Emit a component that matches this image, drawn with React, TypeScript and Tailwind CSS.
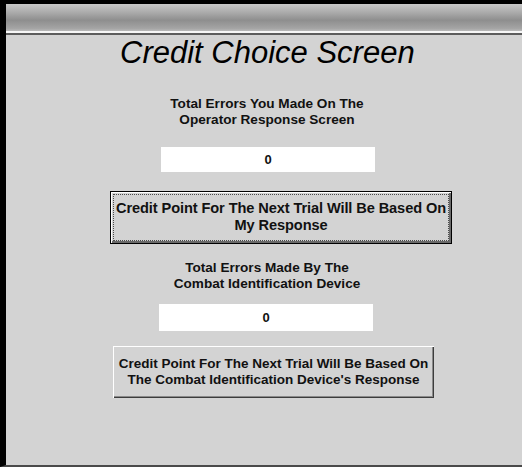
import React from "react";

const sans = { fontFamily: '"Liberation Sans", Arial, sans-serif' };

function Label({ lines }: { lines: string[] }) {
  return (
    <div className="w-[260px] text-center text-[13.6px] font-bold leading-[16px] text-[#111111]">
      {lines.map((l) => (
        <div key={l}>{l}</div>
      ))}
    </div>
  );
}

function CountBox({ value, tall }: { value: string; tall?: boolean }) {
  return (
    <div
      className={
        "flex w-[214px] items-center justify-center bg-white text-[13px] font-bold text-[#111111] " +
        (tall ? "h-[27px]" : "h-[25px]")
      }
    >
      {value}
    </div>
  );
}

export default function App() {
  return (
    <div
      className="flex h-[467px] w-[522px] flex-col border-l-[6px] border-t-[4px] border-b-[2px] border-l-black border-t-black border-b-[#4a4a4a] bg-[#d3d3d3]"
      style={sans}
    >
      {/* title bar */}
      <div className="h-[27px] w-full bg-[linear-gradient(to_bottom,#c8c8c8_0%,#acacac_30%,#8e8e8e_60%,#a4a4a4_90%,#b8b8b8_100%)]" />
      <div className="h-[2px] w-full bg-[#f6f6f6]" />
      <div className="h-[2px] w-full bg-[#5c5c5c]" />

      {/* screen body */}
      <div className="flex flex-1 flex-col">
        <div className="ml-[114px] mt-[1px] text-[31px] italic leading-[33px] text-black">
          Credit Choice Screen
        </div>

        <div className="ml-[131px] mt-[27px]">
          <Label lines={["Total Errors You Made On The", "Operator Response Screen"]} />
        </div>

        <div className="ml-[155px] mt-[19px]">
          <CountBox value="0" />
        </div>

        {/* focused button */}
        <div className="ml-[104px] mt-[19px] flex h-[53px] w-[342px] border border-black bg-[#d3d3d3] p-[1px] shadow-[inset_1px_1px_0_#ffffff,inset_-2px_-2px_0_#6a6a6a]">
          <div className="m-[1px] flex flex-1 flex-col items-center justify-center border border-dotted border-[#4a4a4a] pb-[2px] text-[14.6px] font-bold leading-[17px] tracking-[-0.1px] text-[#111111]">
            <div className="whitespace-nowrap">Credit Point For The Next Trial Will Be Based On</div>
            <div>My Response</div>
          </div>
        </div>

        <div className="ml-[131px] mt-[16px]">
          <Label lines={["Total Errors Made By The", "Combat Identification Device"]} />
        </div>

        <div className="ml-[153px] mt-[12px]">
          <CountBox value="0" tall />
        </div>

        <div className="ml-[107px] mt-[15px] flex h-[52px] w-[321px] flex-col items-center justify-center bg-[#d3d3d3] text-[13.5px] font-bold leading-[16px] text-[#111111] shadow-[inset_1px_1px_0_#ffffff,inset_-1px_-1px_0_#3c3c3c,inset_-2px_-2px_0_#8a8a8a]">
          <div>Credit Point For The Next Trial Will Be Based On</div>
          <div>The Combat Identification Device's Response</div>
        </div>
      </div>
    </div>
  );
}
